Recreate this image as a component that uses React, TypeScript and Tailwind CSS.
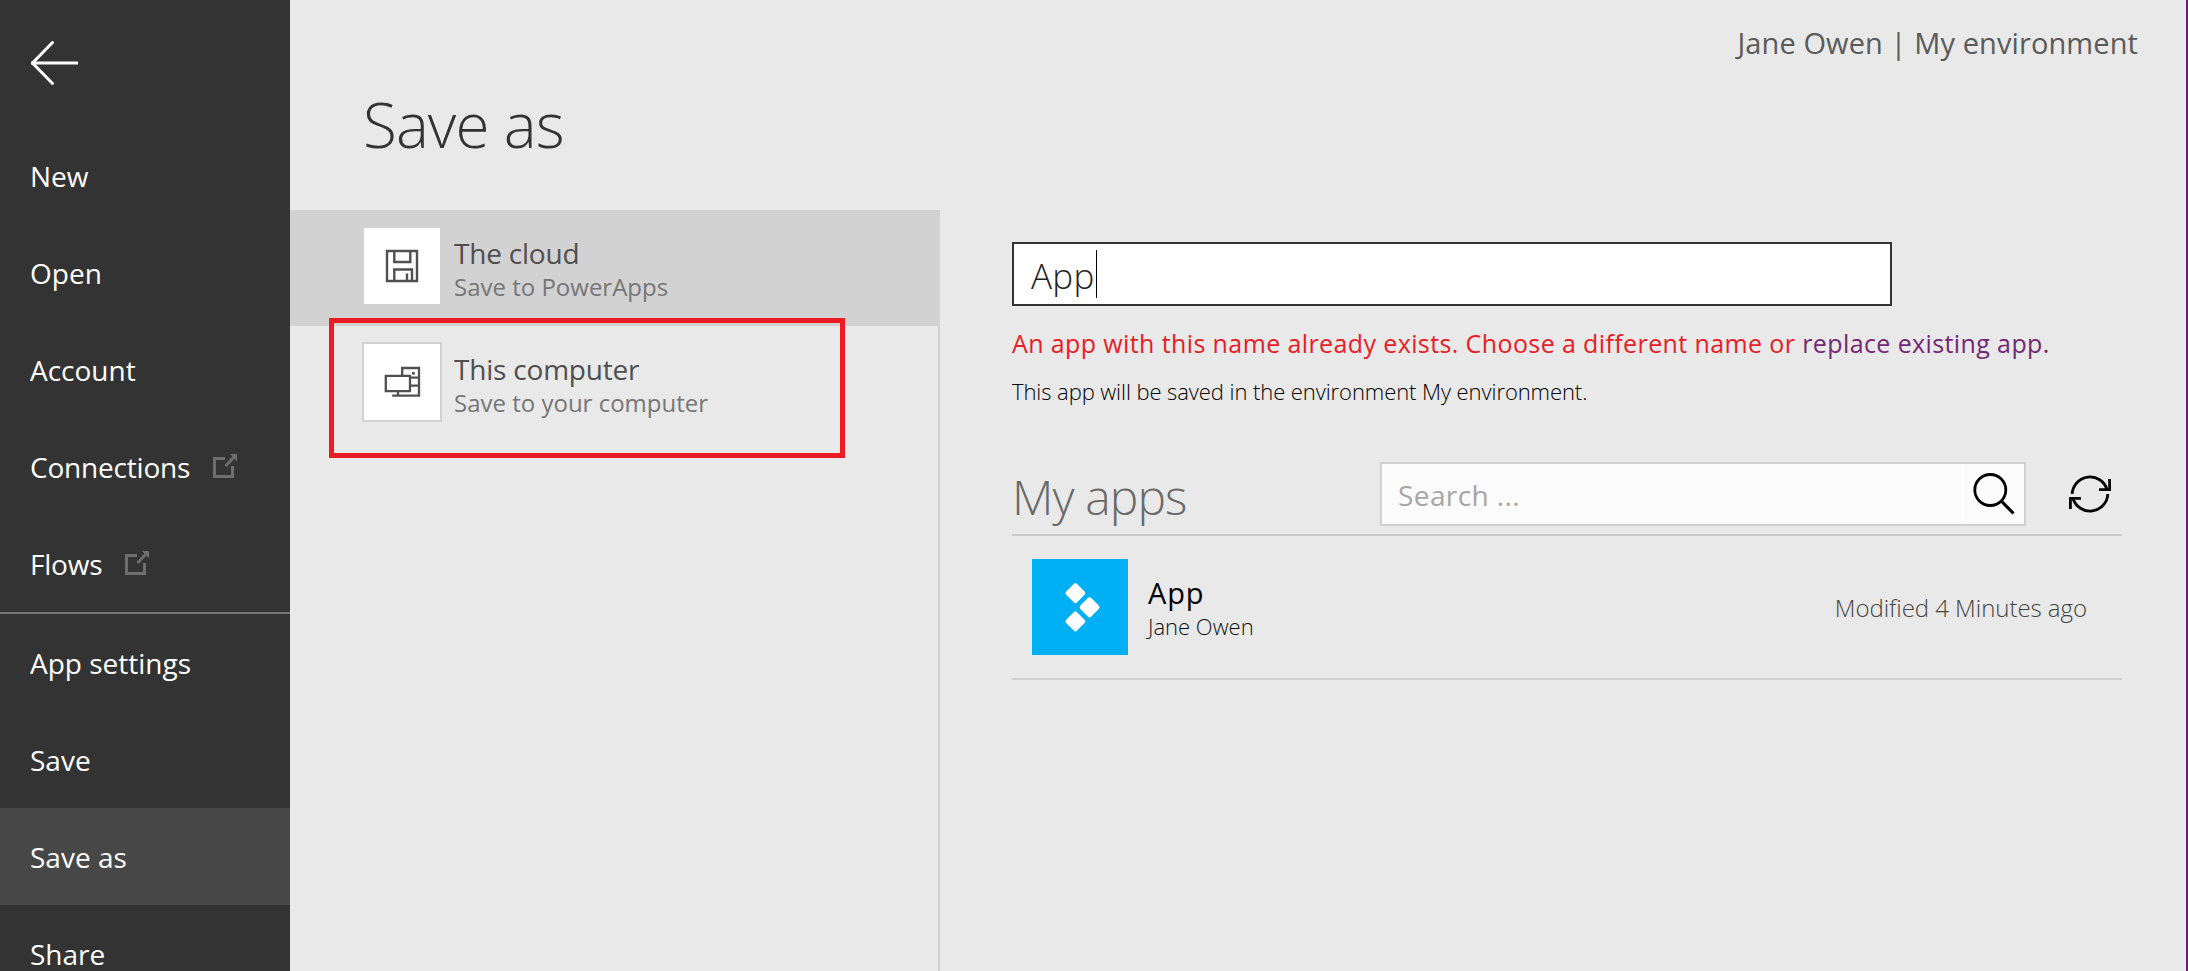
import type { ReactNode } from "react";

function BackArrow() {
  return (
    <svg width="52" height="48" viewBox="0 0 52 48" fill="none" stroke="#fff" strokeWidth="3">
      <path d="M50 24H3" />
      <path d="M24.5 3.5L4.5 24L24.5 44.5" strokeLinecap="round" strokeLinejoin="round" />
    </svg>
  );
}

function ExternalIcon() {
  return (
    <svg width="24" height="24" viewBox="0 0 24 24" fill="none" stroke="#6e6e6e">
      <path d="M12 4.5H1.5V22.5H19.5V12" strokeWidth="3" />
      <path d="M12.5 12L21 3" strokeWidth="3" />
      <path d="M17 0H24V7.5Z" fill="#6e6e6e" stroke="none" />
    </svg>
  );
}

function FloppyIcon() {
  return (
    <svg width="34" height="34" viewBox="0 0 34 34" fill="none" stroke="#505050" strokeWidth="2.4">
      <path d="M2 2H32V32H2Z" />
      <path d="M9.3 2V13H25.3V2" />
      <path d="M9.3 32V20.5H27V32" />
      <path d="M22 24.5V32" />
    </svg>
  );
}

function ComputerIcon() {
  return (
    <svg width="34" height="34" viewBox="0 0 34 34" fill="none" stroke="#505050" strokeWidth="2.3" className="overflow-visible">
      <path d="M0.8 10.8H25V26.2H0.8Z" />
      <path d="M17.2 10.8V3H34V30.6H7.2" />
      <path d="M25 12.7H34M25 20.7H34M13 26.2V30.6" />
      <path d="M27 8.3H29.8" strokeWidth="2.6" />
    </svg>
  );
}

function SearchIcon() {
  return (
    <svg width="44" height="44" viewBox="0 0 44 44" fill="none" stroke="#000" strokeWidth="2.8">
      <circle cx="18.3" cy="18" r="15.5" />
      <path d="M29.3 29L41.5 41.5" strokeWidth="3.2" />
    </svg>
  );
}

function RefreshIcon() {
  return (
    <svg width="44" height="40" viewBox="0 0 44 40" fill="none" stroke="#000" strokeWidth="2.8">
      <path d="M4.2 20A17.8 17.8 0 0 1 39 15.5" />
      <path d="M39.8 20A17.8 17.8 0 0 1 5 24.5" />
      <path d="M41.6 5V15.6H31" />
      <path d="M2.4 35V24.4H13" />
    </svg>
  );
}

function AppLogo() {
  return (
    <svg width="96" height="96" viewBox="0 0 96 96" fill="#fff">
      <rect x="35.7" y="26.4" width="15.4" height="15.4" rx="2.4" transform="rotate(45 43.4 34.1)" />
      <rect x="49.9" y="40.6" width="15.4" height="15.4" rx="2.4" transform="rotate(45 57.6 48.3)" />
      <rect x="35.7" y="54.7" width="15.4" height="15.4" rx="2.4" transform="rotate(45 43.4 62.4)" />
    </svg>
  );
}

type MenuItem = { label: string; external?: boolean; active?: boolean };

const fileMenu: MenuItem[] = [
  { label: "New" },
  { label: "Open" },
  { label: "Account" },
  { label: "Connections", external: true },
  { label: "Flows", external: true },
];

const appMenu: MenuItem[] = [
  { label: "App settings" },
  { label: "Save" },
  { label: "Save as", active: true },
  { label: "Share" },
];

function MenuRow({ label, external, active }: MenuItem) {
  return (
    <li className={`flex h-[97px] shrink-0 items-center pl-[30px] ${active ? "bg-[#474747]" : ""}`}>
      <span className={external ? "tracking-[-0.2px]" : ""}>{label}</span>
      {external && (
        <span className="mb-px ml-[23px]">
          <ExternalIcon />
        </span>
      )}
    </li>
  );
}

function Destination({ icon, title, hint, active }: { icon: ReactNode; title: string; hint: string; active?: boolean }) {
  return (
    <div className={`flex h-[116px] pt-4 pl-[72px] ${active ? "bg-[#d2d2d2]" : ""}`}>
      <div className="flex size-20 items-center justify-center border-2 border-[#d2d2d2] bg-white">{icon}</div>
      <div className="ml-3 pt-[11px]">
        <div className="text-[28px] leading-8 tracking-[-0.2px] text-[#4f4f4f]">{title}</div>
        <div className="mt-0.5 text-[24px] leading-8 text-[#767676]">{hint}</div>
      </div>
    </div>
  );
}

export default function App() {
  return (
    <div className="flex h-[971px] w-[2188px] overflow-hidden bg-[#e9e9e9] font-['Open_Sans','Noto_Sans',sans-serif]">
      <nav className="w-[290px] shrink-0 bg-[#333333] text-[28px] leading-8 text-white">
        <div className="h-[127px] pt-[39px] pl-7">
          <BackArrow />
        </div>
        <ul>
          {fileMenu.map((item) => (
            <MenuRow key={item.label} {...item} />
          ))}
        </ul>
        <ul className="border-t-2 border-[#767676]">
          {appMenu.map((item) => (
            <MenuRow key={item.label} {...item} />
          ))}
        </ul>
      </nav>

      <main className="flex grow flex-col border-r-2 border-[#7a1570]">
        <header className="h-[210px] shrink-0">
          <div className="pt-[23px] pr-12 text-right text-[29px] leading-10 tracking-[0.1px] text-[#5a5a5a]">
            Jane Owen | My environment
          </div>
          <h1 className="mt-[21px] pl-[73px] text-[62px] leading-[80px] font-light tracking-[-0.9px] text-[#333333]">Save as</h1>
        </header>

        <div className="flex grow">
          <section className="relative w-[650px] shrink-0 border-r-2 border-[#d2d2d2]">
            <Destination icon={<FloppyIcon />} title="The cloud" hint="Save to PowerApps" active />
            <Destination icon={<ComputerIcon />} title="This computer" hint="Save to your computer" />
            <div className="absolute top-[108px] left-[39px] h-[140px] w-[516px] border-[5px] border-[#ed1c24]" />
          </section>

          <section className="pt-8 pl-[72px]">
            <div className="flex h-16 w-[880px] items-center border-2 border-[#333333] bg-white pl-[17px]">
              <span className="pt-[3px] text-[35px] leading-[48px] font-light tracking-[0.3px] text-[#222222]">App</span>
              <span className="ml-px h-12 w-px bg-black" />
            </div>
            <p className="mt-[21px] text-[25px] leading-8 tracking-[0.39px] whitespace-nowrap text-[#e81c24]">
              An app with this name already exists. Choose a different name or{" "}
              <a className="text-[#742774]">replace existing app.</a>
            </p>
            <p className="mt-[17px] text-[22px] leading-[30px] font-light tracking-[-0.08px] text-black">
              This app will be saved in the environment My environment.
            </p>

            <div className="mt-14 flex h-[74px] w-[1110px] items-start border-b-2 border-[#cacaca]">
              <h2 className="w-[368px] pt-[3px] text-[48px] leading-[64px] font-light tracking-[-0.9px] text-[#6a6a6a]">My apps</h2>
              <div className="flex h-16 w-[646px] items-center border-2 border-[#d0d0d0] bg-[#fbfbfb]">
                <span className="w-[580px] pt-px pl-4 text-[28px] tracking-[0.4px] text-[#a6a6a6]">Search ...</span>
                <span className="flex h-full grow items-center border-l border-white pl-[9px]">
                  <SearchIcon />
                </span>
              </div>
              <span className="mt-3 ml-[42px]">
                <RefreshIcon />
              </span>
            </div>

            <div className="flex h-36 w-[1110px] border-b-2 border-[#d0d0d0] pt-[23px] pr-[35px] pl-5">
              <div className="size-24 bg-[#00b0f4]">
                <AppLogo />
              </div>
              <div className="ml-5 pt-[18px]">
                <div className="text-[29px] leading-8 tracking-[0.8px] text-black">App</div>
                <div className="mt-[3px] text-[22px] leading-7 font-light text-[#111111]">Jane Owen</div>
              </div>
              <div className="ml-auto pt-[33px] text-[24px] leading-8 font-light tracking-[-0.04px] text-[#444444]">
                Modified 4 Minutes ago
              </div>
            </div>
          </section>
        </div>
      </main>
    </div>
  );
}
